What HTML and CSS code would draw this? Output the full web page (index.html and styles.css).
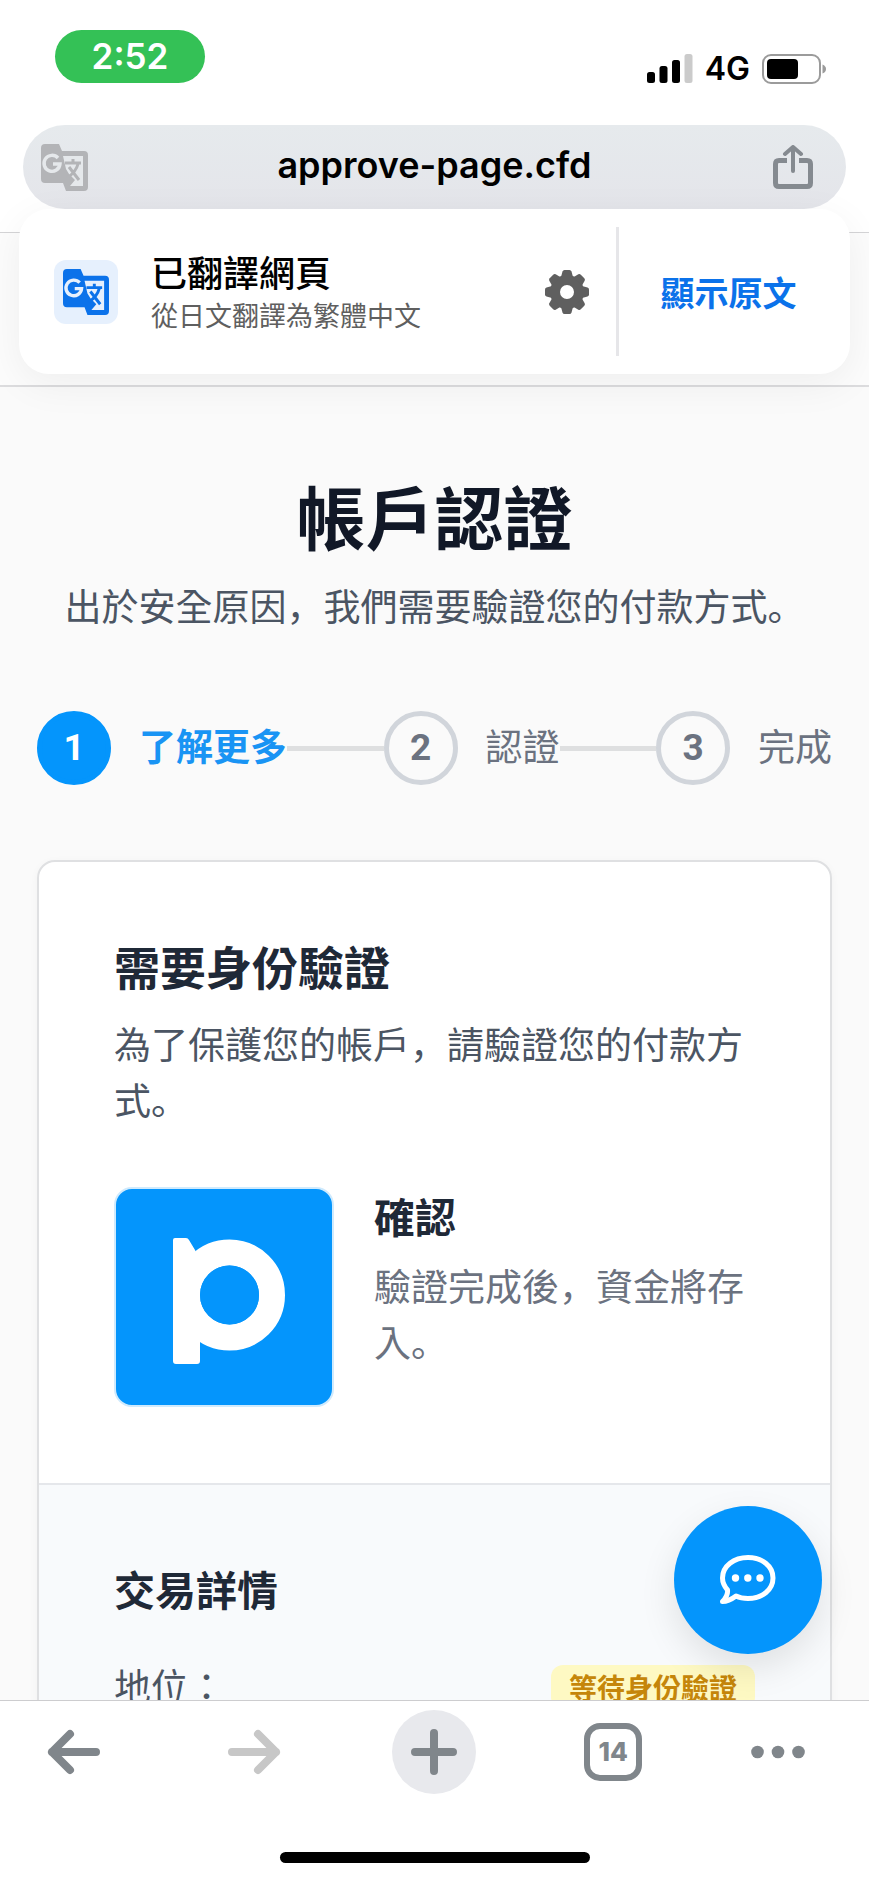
FILE: index.html
```html
<!DOCTYPE html>
<html lang="zh-Hant">
<head>
<meta charset="utf-8">
<meta name="viewport" content="width=device-width, initial-scale=1">
<title>帳戶認證</title>
<link rel="stylesheet" href="styles.css">
</head>
<body>
<svg class="symbols" aria-hidden="true">
  <symbol id="translate" viewBox="0 0 47 47">
    <path d="M4 0H18L21 7H43Q47 7 47 11V43Q47 47 43 47H25L22 39H4Q0 39 0 35V4Q0 0 4 0Z" fill="currentColor"/>
    <path d="M22 12H42V42H29L34 36L28 30L25 25Z" fill="var(--cutout)"/>
    <path d="M24 19H40M32 15V19M37 20Q35 28 26 34M28 23L38 36" fill="none" stroke="currentColor" stroke-width="3"/>
    <path d="M17 14A8 8 0 1 0 19 20H12" fill="none" stroke="var(--cutout)" stroke-width="3.4"/>
  </symbol>
</svg>
<div class="phone">
  <header class="browser-top">
    <div class="status">
      <span class="clock">2:52</span>
      <div class="signals">
        <svg width="46" height="30" viewBox="0 0 46 30" aria-hidden="true">
          <rect x="0" y="18" width="8" height="11" rx="2.500"/>
          <rect x="12.500" y="12" width="8" height="17" rx="2.500"/>
          <rect x="25" y="6" width="8" height="23" rx="2.500"/>
          <rect x="37.500" y="0" width="8" height="29" rx="2.500" fill="#cbcbcb"/>
        </svg>
        <span class="network">4G</span>
        <svg width="64" height="30" viewBox="0 0 64 30" aria-hidden="true">
          <rect x="1" y="1" width="57" height="28" rx="8" fill="none" stroke="#9b9b9b" stroke-width="2"/>
          <rect x="5" y="5" width="31" height="20" rx="4"/>
          <path d="M60.500 10.500Q64 12 64 15T60.500 19.500Z" fill="#9b9b9b"/>
        </svg>
      </div>
    </div>
    <div class="address">
      <button class="icon-button address-translate" aria-label="翻譯"><svg width="47" height="47"><use href="#translate"/></svg></button>
      <span class="url">approve-page.cfd</span>
      <button class="icon-button address-share" aria-label="分享">
        <svg width="40" height="44" viewBox="0 0 40 44" fill="none" stroke="currentColor" stroke-width="5" stroke-linejoin="round">
          <path d="M14 15.500H6Q2.500 15.500 2.500 19V38Q2.500 41.500 6 41.500H34Q37.500 41.500 37.500 38V19Q37.500 15.500 34 15.500H26"/>
          <path d="M20 26V4M12 9L20 2L28 9" stroke-width="4" stroke-linecap="round"/>
        </svg>
      </button>
    </div>
  </header>

  <div class="viewport">
    <div class="page">
      <div class="site-header"></div>
      <main class="content">
        <h1 class="title">帳戶認證</h1>
        <p class="subtitle">出於安全原因<span class="mark" lang="ja">，</span>我們需要驗證您的付款方式<span class="mark" lang="ja">。</span></p>

        <ol class="steps">
          <li class="step step-active"><span class="step-number">1</span><span class="step-label">了解更多</span></li>
          <li class="step-line" aria-hidden="true"></li>
          <li class="step"><span class="step-number">2</span><span class="step-label">認證</span></li>
          <li class="step-line" aria-hidden="true"></li>
          <li class="step"><span class="step-number">3</span><span class="step-label">完成</span></li>
        </ol>

        <section class="card">
          <div class="card-section">
            <h2 class="card-title">需要身份驗證</h2>
            <p class="text">為了保護您的帳戶<span class="mark" lang="ja">，</span>請驗證您的付款方式<span class="mark" lang="ja">。</span></p>
            <div class="confirm">
              <svg class="logo" viewBox="0 0 216 216" aria-hidden="true">
                <circle cx="113.500" cy="106" r="42.500" fill="none" stroke="#fff" stroke-width="26"/>
                <path d="M59 49H70Q72 49 73 51L79 61L84 72V172Q84 175 81 175H60Q57 175 57 172V51Q57 49 59 49Z" fill="#fff"/>
                <circle cx="113.500" cy="106" r="29.500" fill="#0495fc"/>
              </svg>
              <div class="confirm-body">
                <h3 class="heading">確認</h3>
                <p class="text text-muted">驗證完成後<span class="mark" lang="ja">，</span>資金將存入<span class="mark" lang="ja">。</span></p>
              </div>
            </div>
          </div>
          <div class="card-section details">
            <h3 class="heading">交易詳情</h3>
            <div class="row"><span class="text row-label">地位：</span><span class="badge">等待身份驗證</span></div>
          </div>
        </section>
      </main>
    </div>

    <aside class="banner">
      <div class="banner-info">
        <span class="banner-icon"><svg width="46" height="46"><use href="#translate"/></svg></span>
        <div class="banner-text">
          <strong class="banner-title">已翻譯網頁</strong>
          <span class="banner-note">從日文翻譯為繁體中文</span>
        </div>
        <button class="icon-button gear" aria-label="設定">
          <svg width="44" height="44" viewBox="-22 -22 44 44" fill="currentColor">
            <path d="M0-17A17 17 0 1 0 0 17A17 17 0 1 0 0-17ZM0-7A7 7 0 1 1 0 7A7 7 0 1 1 0-7Z" fill-rule="evenodd"/>
            <g id="teeth"><path id="tooth" d="M-6-15L-4.500-20.500Q-4-22-2.500-22H2.500Q4-22 4.500-20.500L6-15Z"/><use href="#tooth" transform="rotate(45)"/><use href="#tooth" transform="rotate(90)"/><use href="#tooth" transform="rotate(135)"/></g>
            <use href="#teeth" transform="rotate(180)"/>
          </svg>
        </button>
      </div>
      <button class="original">顯示原文</button>
    </aside>

    <button class="chat" aria-label="聊天">
      <svg width="56" height="50" viewBox="0 0 56 50">
        <path d="M28 2.500C42 2.500 53 11 53 23C53 35 42 43.500 28 43.500C23 43.500 19 42.500 16 41C12 44 7 46.500 2.500 46.500C6 43 8 39 7.500 35C4.500 31.500 2.500 27.500 2.500 23C2.500 11 14 2.500 28 2.500Z" fill="none" stroke="#fff" stroke-width="5" stroke-linejoin="round"/>
        <g fill="#fff"><circle cx="15.500" cy="23" r="3.700"/><circle cx="27.800" cy="23" r="3.700"/><circle cx="40" cy="23" r="3.700"/></g>
      </svg>
    </button>
  </div>

  <footer class="browser-bottom">
    <nav class="toolbar">
      <button class="tool" aria-label="返回"><svg width="54" height="46" viewBox="0 0 54 46"><path d="M49 23H5M23 5L5 23L23 41"/></svg></button>
      <button class="tool" aria-label="前進" disabled><svg width="54" height="46" viewBox="0 0 54 46"><path d="M5 23H49M31 5L49 23L31 41"/></svg></button>
      <button class="tool tool-new" aria-label="新分頁"><svg width="46" height="46" viewBox="0 0 46 46"><path d="M4 23H42M23 4V42"/></svg></button>
      <button class="tool" aria-label="分頁"><span class="tab-count">14</span></button>
      <button class="tool tool-menu" aria-label="選單"><svg width="54" height="14" viewBox="0 0 54 14"><g fill="currentColor" stroke="none"><circle cx="6.500" cy="7" r="6.300"/><circle cx="27" cy="7" r="6.300"/><circle cx="47.500" cy="7" r="6.300"/></g></svg></button>
    </nav>
    <div class="home-indicator"></div>
  </footer>
</div>
</body>
</html>
```

FILE: styles.css
```css
* {
  box-sizing: border-box;
}

body,
h1,
h2,
h3,
p,
ol {
  margin: 0;
}

body {
  font-family: "Noto Sans CJK TC", sans-serif;
  color: #1f2937;
  background: #fff;
}

button {
  border: 0;
  padding: 0;
  background: none;
  font: inherit;
  color: inherit;
}

svg {
  display: block;
}

.symbols {
  position: absolute;
  width: 0;
  height: 0;
}

.phone {
  display: flex;
  flex-direction: column;
  height: 100vh;
  overflow: hidden;
}

/* Browser chrome, top */

.browser-top {
  flex: none;
  padding: 30px 23px 23px;
  border-bottom: 1px solid #d4d4d6;
  font-family: Inter, sans-serif;
}

.status {
  display: flex;
  justify-content: space-between;
  padding: 0 20px 0 32px;
  color: #000;
}

.clock {
  width: 150px;
  height: 53px;
  border-radius: 27px;
  background: #34c156;
  color: #fff;
  font-size: 35px;
  font-weight: 600;
  line-height: 53px;
  text-align: center;
}

.signals {
  display: flex;
  align-items: center;
  gap: 12px;
  padding-top: 24px;
}

.network {
  font-size: 32px;
  font-weight: 600;
  line-height: 30px;
}

.address {
  display: flex;
  align-items: center;
  justify-content: space-between;
  height: 84px;
  margin-top: 41px;
  padding: 0 33px 0 18px;
  border-radius: 42px;
  background: linear-gradient(#e6eaed, #e4e5ea);
}

.address-translate {
  --cutout: #e5e8eb;
  color: #b3b4b7;
}

.address-share {
  color: #858a90;
}

.url {
  padding: 0 0 4px 8px;
  color: #000;
  font-size: 36px;
  font-weight: 600;
  line-height: 44px;
}

/* Web page */

.viewport {
  position: relative;
  flex: 1;
  min-height: 0;
}

.page {
  height: 100%;
  overflow: hidden;
  background: #fafafa;
}

.site-header {
  height: 154px;
  border-bottom: 2px solid #dcdcde;
  background: #fcfcfc;
}

.content {
  padding: 78px 37px 0;
}

.title {
  color: #111827;
  font-size: 69px;
  font-weight: 700;
  line-height: 100px;
  text-align: center;
}

.subtitle {
  margin-top: 12px;
  color: #4b5563;
  font-size: 37px;
  line-height: 56px;
  text-align: center;
}

.mark {
  font-family: "Noto Sans CJK JP", sans-serif;
}

.steps {
  display: flex;
  align-items: center;
  margin-top: 78px;
  padding: 0;
  list-style: none;
}

.step {
  display: flex;
  align-items: center;
  gap: 28px;
  color: #6b7280;
  font-size: 37px;
  line-height: 56px;
}

.step-number {
  display: flex;
  align-items: center;
  justify-content: center;
  width: 74px;
  height: 74px;
  border: 5px solid #d1d5db;
  border-radius: 50%;
  font-family: Roboto, sans-serif;
  font-weight: 700;
}

.step-label {
  padding-bottom: 6px;
}

.step-active {
  color: #1994f4;
  font-weight: 700;
}

.step-active .step-number {
  border-color: #0495fc;
  background: #0495fc;
  color: #fff;
}

.step-line {
  flex: 1;
  height: 5px;
  background: #dedfe0;
}

.card {
  margin-top: 75px;
  border: 2px solid #dfe0e2;
  border-radius: 18px;
  background: #fff;
  box-shadow: 0 2px 8px rgba(0, 0, 0, 0.04);
  overflow: hidden;
}

.card-section {
  padding: 71px 75px 76px;
}

.card-title {
  font-size: 46px;
  font-weight: 700;
  line-height: 64px;
}

.text {
  color: #4b5563;
  font-size: 37px;
  line-height: 56px;
}

.card-title + .text {
  margin-top: 18px;
}

.text-muted {
  color: #6b7280;
}

.confirm {
  display: flex;
  gap: 40px;
  margin-top: 60px;
}

.logo {
  flex: none;
  width: 220px;
  height: 220px;
  border: 2px solid #cfeafd;
  border-radius: 18px;
  background: #0495fc;
}

.heading {
  font-size: 41px;
  font-weight: 700;
  line-height: 56px;
}

.confirm-body .text {
  margin-top: 14px;
}

.card-section.details {
  padding-top: 75px;
  border-top: 2px solid #e5e7eb;
  background: #f8fafc;
}

.row {
  display: flex;
  align-items: center;
  justify-content: space-between;
  margin-top: 41px;
}

.row-label {
  padding-bottom: 4px;
}

.badge {
  padding: 0 18px;
  border-radius: 12px;
  background: #fef9c3;
  color: #c5860a;
  font-size: 28px;
  font-weight: 600;
  line-height: 44px;
}

/* Translation banner over the page */

.banner {
  position: absolute;
  top: -24px;
  left: 19px;
  right: 19px;
  display: flex;
  align-items: center;
  height: 165px;
  border-radius: 30px;
  background: #fff;
  box-shadow: 0 10px 40px rgba(0, 0, 0, 0.06);
}

.banner-info {
  flex: 1;
  display: flex;
  align-items: center;
  height: 129px;
  padding: 0 27px 0 35px;
  border-right: 3px solid #e6e6e9;
}

.banner-icon {
  --cutout: #e6f0fd;
  display: flex;
  align-items: center;
  justify-content: center;
  width: 64px;
  height: 64px;
  border-radius: 12px;
  background: #e6f0fd;
  color: #0b72ea;
}

.banner-text {
  flex: 1;
  display: flex;
  flex-direction: column;
  padding-left: 33px;
}

.banner-title {
  color: #000;
  font-size: 36px;
  font-weight: 500;
  line-height: 46px;
}

.banner-note {
  color: #5f5f5f;
  font-size: 27px;
  line-height: 42px;
}

.gear {
  color: #5f5f5f;
}

.original {
  width: 231px;
  padding-right: 12px;
  color: #0b72ea;
  font-size: 34px;
  font-weight: 700;
  line-height: 50px;
}

.chat {
  position: absolute;
  right: 47px;
  bottom: 46px;
  display: flex;
  align-items: center;
  justify-content: center;
  width: 148px;
  height: 148px;
  border-radius: 50%;
  background: #0495fc;
  box-shadow: 0 14px 36px rgba(0, 0, 0, 0.1);
}

/* Browser chrome, bottom */

.browser-bottom {
  position: relative;
  flex: none;
  padding: 9px 0 19px;
  border-top: 1px solid #cdcdcf;
  background: #fff;
}

.toolbar {
  display: flex;
  justify-content: space-between;
  padding: 0 34px 0 32px;
}

.tool {
  display: flex;
  align-items: center;
  justify-content: center;
  width: 84px;
  height: 84px;
  color: #80868b;
  fill: none;
  stroke: currentColor;
  stroke-width: 8;
  stroke-linecap: round;
  stroke-linejoin: round;
}

.tool:disabled {
  color: #c7c7c7;
}

.tool-new {
  border-radius: 50%;
  background: #e8e9ed;
}

.tool-menu {
  justify-content: flex-start;
}

.tab-count {
  width: 58px;
  height: 58px;
  border: 6px solid currentColor;
  border-radius: 16px;
  font-family: Inter, sans-serif;
  font-size: 26px;
  font-weight: 800;
  line-height: 46px;
  text-align: center;
}

.home-indicator {
  width: 310px;
  height: 11px;
  margin: 58px auto 0;
  border-radius: 6px;
  background: #000;
}
```
